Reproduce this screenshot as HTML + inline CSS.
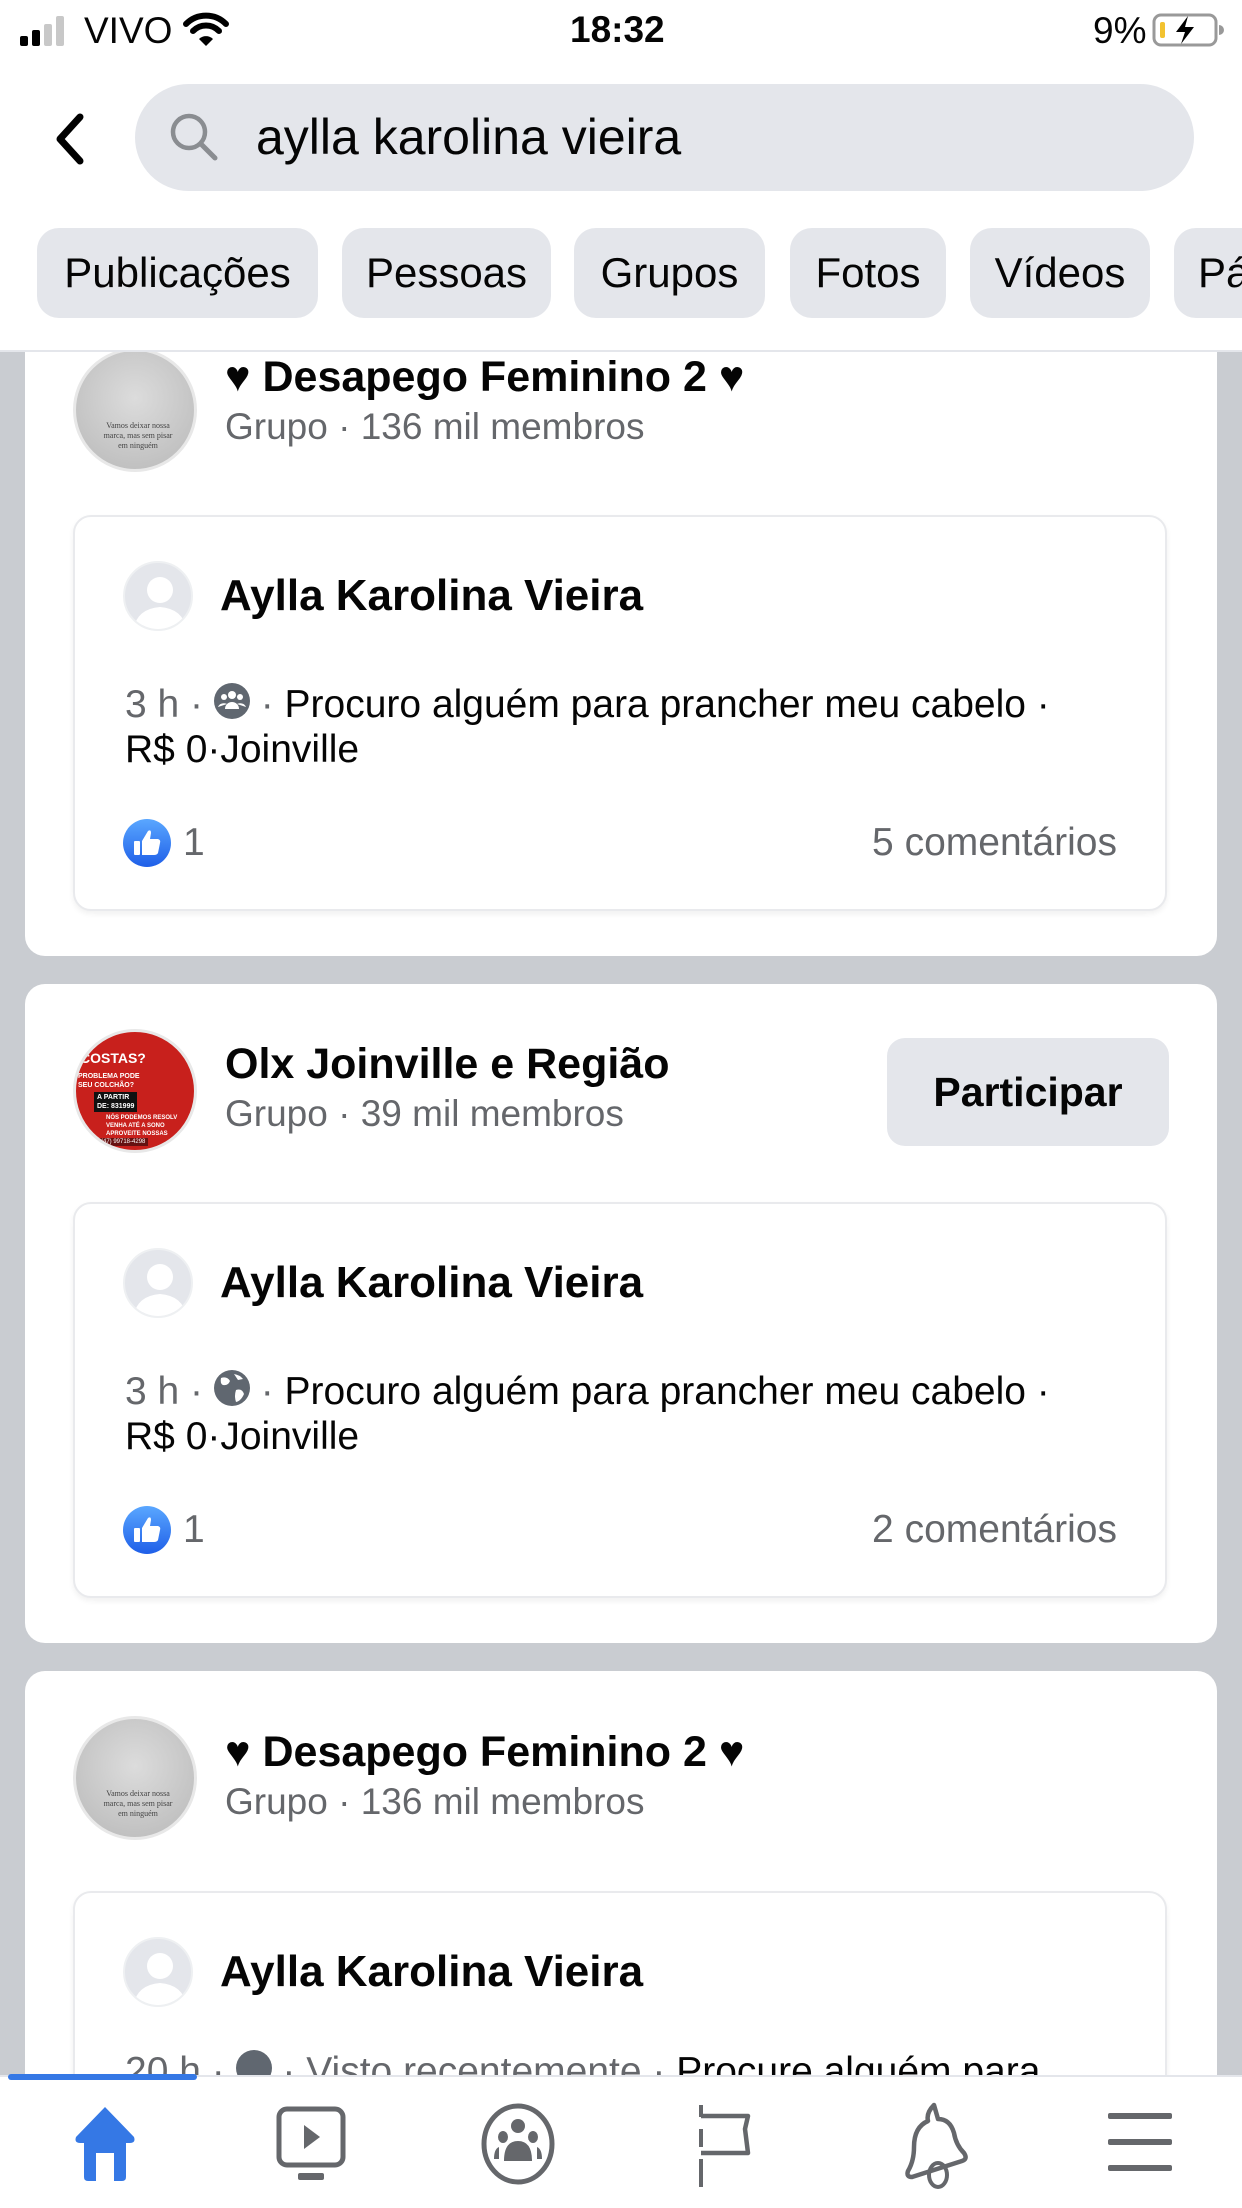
<!DOCTYPE html>
<html style="width:1242px;height:2208px;overflow:hidden"><head><meta charset="utf-8"><style>
*{margin:0;padding:0;box-sizing:border-box}
body{width:1242px;height:2208px;overflow:hidden;background:#c9ccd1;font-family:"Liberation Sans",Arial,sans-serif;position:relative;color:#050505}
.a{position:absolute;white-space:nowrap}
.hdr{position:absolute;left:0;top:0;width:1242px;height:352px;background:#fff;border-bottom:2px solid #e4e6eb;z-index:5}
.chip{position:absolute;top:228px;height:90px;background:#e4e6eb;border-radius:22px;font-size:42px;line-height:90px;text-align:center;color:#050505}
.card{position:absolute;left:25px;width:1192px;background:#fff;border-radius:20px;overflow:hidden}
.inner{position:absolute;left:48px;width:1094px;background:#fff;border:2px solid #e9eaed;border-radius:18px;box-shadow:0 3px 6px rgba(0,0,0,.06)}
.title{font-size:43px;font-weight:bold;line-height:50px}
.sub{font-size:37px;color:#65676b;line-height:44px}
.meta{font-size:39px;line-height:45px;color:#050505}
.g{color:#65676b}
.pav{position:absolute;width:70px;height:70px;border-radius:50%;background:#e4e6eb;border:2px solid #eef0f2;overflow:hidden}
.gav{position:absolute;width:124px;height:124px;border-radius:50%;background:radial-gradient(circle at 50% 40%,#dcdcdc,#b8b8b8);border:3px solid #e8e8e8;overflow:hidden}
.tab{position:absolute;left:0;top:2075px;width:1242px;height:133px;background:#fff;border-top:2px solid #e4e6eb;z-index:6}
</style></head><body>

<div class="hdr">
  <svg class="a" style="left:18px;top:12px" width="60" height="36" viewBox="0 0 60 36">
    <rect x="2" y="24" width="8" height="10" rx="2" fill="#000"/>
    <rect x="14" y="18" width="8" height="16" rx="2" fill="#000"/>
    <rect x="26" y="12" width="8" height="22" rx="2" fill="#c8c8c8"/>
    <rect x="38" y="4" width="8" height="30" rx="2" fill="#c8c8c8"/>
  </svg>
  <div class="a" style="left:84px;top:9px;font-size:37px;line-height:44px">VIVO</div>
  <svg class="a" style="left:182px;top:12px" width="48" height="36" viewBox="0 0 48 36">
    <path d="M4 12 A28 28 0 0 1 44 12" stroke="#000" stroke-width="6" fill="none" stroke-linecap="round"/>
    <path d="M11 19 A18 18 0 0 1 37 19" stroke="#000" stroke-width="6" fill="none" stroke-linecap="round"/>
    <path d="M17 27 L24 34 L31 27 A10 10 0 0 0 17 27Z" fill="#000"/>
  </svg>
  <div class="a" style="left:570px;top:8px;font-size:37px;line-height:44px;font-weight:bold">18:32</div>
  <div class="a" style="left:1093px;top:9px;font-size:37px;line-height:44px">9%</div>
  <svg class="a" style="left:1152px;top:12px" width="72" height="36" viewBox="0 0 72 36">
    <rect x="2" y="3" width="62" height="30" rx="7" fill="none" stroke="#999" stroke-width="3"/>
    <rect x="8" y="10" width="5" height="16" rx="2" fill="#f2c230"/>
    <path d="M67 13 v10 a4 4 0 0 0 0-10z" fill="#999"/>
    <path d="M36 4 L24 20 H33 L29 32 L42 15 H33 Z" fill="#000"/>
  </svg>

  <svg class="a" style="left:50px;top:112px" width="40" height="54" viewBox="0 0 40 54">
    <path d="M30 5 L10 27 L30 49" stroke="#000" stroke-width="7" fill="none" stroke-linecap="round" stroke-linejoin="round"/>
  </svg>
  <div class="a" style="left:135px;top:84px;width:1059px;height:107px;background:#e4e6eb;border-radius:54px"></div>
  <svg class="a" style="left:165px;top:108px" width="60" height="60" viewBox="0 0 60 60">
    <circle cx="24" cy="24" r="16" stroke="#8a8d91" stroke-width="4.5" fill="none"/>
    <path d="M36 36 L50 50" stroke="#8a8d91" stroke-width="5" stroke-linecap="round"/>
  </svg>
  <div class="a" style="left:256px;top:108px;font-size:50px;line-height:58px">aylla karolina vieira</div>

  <div class="chip" style="left:37px;width:281px">Publicações</div>
  <div class="chip" style="left:342px;width:209px">Pessoas</div>
  <div class="chip" style="left:574px;width:191px">Grupos</div>
  <div class="chip" style="left:790px;width:156px">Fotos</div>
  <div class="chip" style="left:970px;width:180px">Vídeos</div>
  <div class="chip" style="left:1174px;width:120px;text-align:left;padding-left:24px">Pá</div>
</div>

<!-- Card 1 -->
<div class="card" style="top:300px;height:656px">
  <div class="gav" style="left:48px;top:48px"><div class="a" style="left:22px;top:70px;font-family:'Liberation Serif',serif;font-size:8px;color:#444;line-height:10px;text-align:center;width:80px;white-space:normal">Vamos deixar nossa marca, mas sem pisar em ninguém</div></div>
  <div class="a title" style="left:200px;top:52px">♥ Desapego Feminino 2 ♥</div>
  <div class="a sub" style="left:200px;top:105px">Grupo · 136 mil membros</div>
  <div class="inner" style="top:215px;height:396px">
    <div class="pav" style="left:48px;top:44px"><svg width="70" height="70" viewBox="0 0 70 70"><circle cx="35" cy="27" r="13" fill="#fff"/><path d="M8 70 Q10 46 35 44 Q60 46 62 70Z" fill="#fff"/></svg></div>
    <div class="a title" style="left:145px;top:54px;font-size:44px">Aylla Karolina Vieira</div>
    <div class="a meta" style="left:50px;top:165px"><span class="g">3 h · </span><svg width="36" height="36" viewBox="0 0 36 36" style="vertical-align:-2px"><circle cx="18" cy="18" r="18" fill="#606770"/><circle cx="18" cy="12" r="4" fill="#fff"/><circle cx="10" cy="14" r="3" fill="#fff"/><circle cx="26" cy="14" r="3" fill="#fff"/><path d="M11 26 a7 7 0 0 1 14 0z M4 24 a6 5 0 0 1 9-3 M32 24 a6 5 0 0 0-9-3" fill="#fff"/></svg><span class="g"> · </span>Procuro alguém para prancher meu cabelo ·</div>
    <div class="a meta" style="left:50px;top:210px">R$ 0·Joinville</div>
    <svg class="a" style="left:48px;top:302px" width="48" height="48" viewBox="0 0 48 48"><defs><linearGradient id="lg" x1="0" y1="0" x2="0" y2="1"><stop offset="0" stop-color="#5aa7ff"/><stop offset="1" stop-color="#1f5fe8"/></linearGradient></defs><circle cx="24" cy="24" r="24" fill="url(#lg)"/><rect x="11" y="22" width="6" height="14" rx="1" fill="#fff"/><path d="M19 22 L25 12 Q28 10 28 14 L27 20 H35 Q38 21 37 24 L35 34 Q34 36 31 36 H19Z" fill="#fff"/></svg>
    <div class="a" style="left:108px;top:302px;font-size:39px;line-height:48px;color:#65676b">1</div>
    <div class="a" style="right:48px;top:302px;font-size:39px;line-height:48px;color:#65676b">5 comentários</div>
  </div>
</div>

<!-- Card 2 -->
<div class="card" style="top:984px;height:659px">
  <div class="gav" style="left:48px;top:45px;background:#c8201c">
    <div class="a" style="left:4px;top:18px;color:#fff;font-weight:bold;font-size:14px">COSTAS?</div>
    <div class="a" style="left:2px;top:40px;color:#fff;font-weight:bold;font-size:7px;line-height:9px">PROBLEMA PODE<br>SEU COLCHÃO?</div>
    <div class="a" style="left:18px;top:60px;background:#111;color:#fff;font-weight:bold;font-size:7px;line-height:9px;padding:1px 3px">A PARTIR<br>DE: 831999</div>
    <div class="a" style="left:30px;top:82px;color:#fff;font-weight:bold;font-size:6px;line-height:8px">NÓS PODEMOS RESOLV<br>VENHA ATÉ A SONO<br>APROVEITE NOSSAS</div>
    <div class="a" style="left:22px;top:106px;background:#611;color:#fff;font-size:6px;padding:1px 3px">(47) 99718-4298</div>
  </div>
  <div class="a title" style="left:200px;top:55px">Olx Joinville e Região</div>
  <div class="a sub" style="left:200px;top:108px">Grupo · 39 mil membros</div>
  <div class="a" style="left:862px;top:54px;width:282px;height:108px;background:#e4e6eb;border-radius:18px;font-size:41px;font-weight:bold;line-height:108px;text-align:center">Participar</div>
  <div class="inner" style="top:218px;height:396px">
    <div class="pav" style="left:48px;top:44px"><svg width="70" height="70" viewBox="0 0 70 70"><circle cx="35" cy="27" r="13" fill="#fff"/><path d="M8 70 Q10 46 35 44 Q60 46 62 70Z" fill="#fff"/></svg></div>
    <div class="a title" style="left:145px;top:54px;font-size:44px">Aylla Karolina Vieira</div>
    <div class="a meta" style="left:50px;top:165px"><span class="g">3 h · </span><svg width="36" height="36" viewBox="0 0 36 36" style="vertical-align:-2px"><circle cx="18" cy="18" r="18" fill="#606770"/><path d="M7 8 Q13 6 16 11 Q14 16 9 15 Q6 14 7 8Z M22 20 Q28 18 30 24 Q27 31 22 32 Q20 26 22 20Z M20 4 Q26 5 29 9 L24 10Z" fill="#fff"/></svg><span class="g"> · </span>Procuro alguém para prancher meu cabelo ·</div>
    <div class="a meta" style="left:50px;top:210px">R$ 0·Joinville</div>
    <svg class="a" style="left:48px;top:302px" width="48" height="48" viewBox="0 0 48 48"><circle cx="24" cy="24" r="24" fill="url(#lg)"/><rect x="11" y="22" width="6" height="14" rx="1" fill="#fff"/><path d="M19 22 L25 12 Q28 10 28 14 L27 20 H35 Q38 21 37 24 L35 34 Q34 36 31 36 H19Z" fill="#fff"/></svg>
    <div class="a" style="left:108px;top:302px;font-size:39px;line-height:48px;color:#65676b">1</div>
    <div class="a" style="right:48px;top:302px;font-size:39px;line-height:48px;color:#65676b">2 comentários</div>
  </div>
</div>

<!-- Card 3 -->
<div class="card" style="top:1671px;height:537px;border-bottom-left-radius:0;border-bottom-right-radius:0">
  <div class="gav" style="left:48px;top:45px"><div class="a" style="left:22px;top:70px;font-family:'Liberation Serif',serif;font-size:8px;color:#444;line-height:10px;text-align:center;width:80px;white-space:normal">Vamos deixar nossa marca, mas sem pisar em ninguém</div></div>
  <div class="a title" style="left:200px;top:56px">♥ Desapego Feminino 2 ♥</div>
  <div class="a sub" style="left:200px;top:109px">Grupo · 136 mil membros</div>
  <div class="inner" style="top:220px;height:340px">
    <div class="pav" style="left:48px;top:44px"><svg width="70" height="70" viewBox="0 0 70 70"><circle cx="35" cy="27" r="13" fill="#fff"/><path d="M8 70 Q10 46 35 44 Q60 46 62 70Z" fill="#fff"/></svg></div>
    <div class="a title" style="left:145px;top:54px;font-size:44px">Aylla Karolina Vieira</div>
    <div class="a meta" style="left:50px;top:156px"><span class="g">20 h · </span><svg width="36" height="36" viewBox="0 0 36 36" style="vertical-align:-2px"><circle cx="18" cy="18" r="18" fill="#606770"/></svg><span class="g"> · Visto recentemente · </span>Procure alguém para</div>
  </div>
</div>

<!-- Tab bar -->
<div class="tab">
  <div class="a" style="left:8px;top:-3px;width:189px;height:6px;background:#3578e5;border-radius:3px"></div>
  <svg class="a" style="left:70px;top:26px" width="70" height="80" viewBox="0 0 70 80">
    <path d="M35 4 L64 34 Q66 40 60 40 H56 V74 Q56 78 52 78 H44 V50 H26 V78 H18 Q14 78 14 74 V40 H10 Q4 40 6 34Z" fill="#3578e5"/>
  </svg>
  <svg class="a" style="left:274px;top:28px" width="76" height="80" viewBox="0 0 76 80">
    <rect x="5" y="4" width="64" height="56" rx="8" stroke="#65676b" stroke-width="5" fill="none"/>
    <path d="M30 20 L46 32 L30 44Z" fill="#65676b"/>
    <rect x="24" y="68" width="26" height="7" rx="2" fill="#65676b"/>
  </svg>
  <svg class="a" style="left:478px;top:22px" width="80" height="90" viewBox="0 0 80 90">
    <ellipse cx="40" cy="45" rx="34" ry="38" stroke="#65676b" stroke-width="5" fill="none"/>
    <circle cx="40" cy="27" r="7" fill="#65676b"/>
    <ellipse cx="25" cy="38" rx="5" ry="6" fill="#65676b"/>
    <ellipse cx="55" cy="38" rx="5" ry="6" fill="#65676b"/>
    <path d="M26 62 Q26 42 40 42 Q54 42 54 62Z" fill="#65676b"/>
    <path d="M16 60 Q16 50 21 48 L21 60Z M64 60 Q64 50 59 48 L59 60Z" fill="#65676b"/>
  </svg>
  <svg class="a" style="left:696px;top:24px" width="60" height="90" viewBox="0 0 60 90">
    <path d="M5 4 V16 M5 28 V46 M5 58 V86" stroke="#65676b" stroke-width="4"/>
    <path d="M5 15 H52 L49 28 L52 52 H5" stroke="#65676b" stroke-width="4.5" fill="none" stroke-linejoin="round"/>
  </svg>
  <svg class="a" style="left:898px;top:22px" width="76" height="92" viewBox="0 0 76 92">
    <path d="M36 6 Q28 14 30 22 Q16 28 16 48 Q16 62 10 72 Q8 78 14 78 L64 62 Q70 60 66 54 Q58 46 56 34 Q52 20 40 20 Z" stroke="#65676b" stroke-width="4.5" fill="none" stroke-linejoin="round"/>
    <ellipse cx="40" cy="76" rx="9" ry="12" stroke="#65676b" stroke-width="4" fill="none"/>
  </svg>
  <svg class="a" style="left:1104px;top:24px" width="72" height="80" viewBox="0 0 72 80">
    <rect x="4" y="12" width="64" height="6" rx="2" fill="#65676b"/>
    <rect x="4" y="38" width="64" height="6" rx="2" fill="#65676b"/>
    <rect x="4" y="64" width="64" height="6" rx="2" fill="#65676b"/>
  </svg>
</div>
</body></html>
